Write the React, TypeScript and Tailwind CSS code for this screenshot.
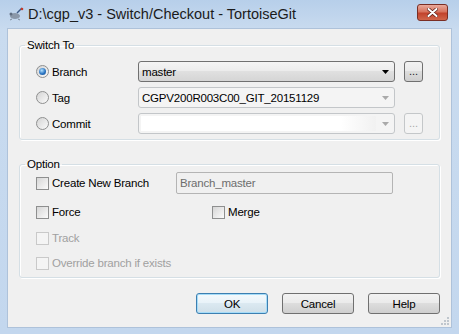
const btnGrad = "bg-[linear-gradient(#f2f2f2,#ebebeb_45%,#dddddd_50%,#cfcfcf)]";

function Radio({ checked }: { checked?: boolean }) {
  return (
    <span className="w-[13px] h-[13px] rounded-full border border-[#8e8f8f] bg-[linear-gradient(135deg,#d4d4d4,#fafafa)] flex items-center justify-center shrink-0">
      {checked && (
        <span className="w-[7px] h-[7px] rounded-full bg-[radial-gradient(circle_at_40%_35%,#b6e3ff,#2a74c2_55%,#1a4f8c)]" />
      )}
    </span>
  );
}

function Check({ disabled }: { disabled?: boolean }) {
  return (
    <span
      className={
        disabled
          ? "w-[13px] h-[13px] border border-[#c9c9c9] bg-[#f4f4f4] shrink-0"
          : "w-[13px] h-[13px] border border-[#8e8f8f] bg-[linear-gradient(135deg,#d6d6d6,#fbfbfb)] shrink-0"
      }
    />
  );
}

function Arrow({ color }: { color: string }) {
  return (
    <svg width="7" height="4" viewBox="0 0 7 4">
      <path d="M0 0h7L3.5 4z" fill={color} />
    </svg>
  );
}

function Dots({ disabled }: { disabled?: boolean }) {
  return (
    <div
      className={
        disabled
          ? "w-[19px] h-[21px] rounded-[3px] border border-[#c4c7c9] bg-[#f4f4f4] flex items-end justify-center pb-[4px] text-[11px] leading-none tracking-normal text-[#a8a8a8]"
          : `w-[19px] h-[21px] rounded-[3px] border border-[#707070] ${btnGrad} flex items-end justify-center pb-[4px] text-[11px] leading-none tracking-normal text-[#222]`
      }
    >
      ...
    </div>
  );
}

function Button({ label, primary }: { label: string; primary?: boolean }) {
  return (
    <div
      className={
        primary
          ? "w-[72px] h-[21px] rounded-[3px] border border-[#3c7fb1] shadow-[inset_0_0_0_1px_#a6dcf8] bg-[linear-gradient(#f4f9fc,#e9f3f9_45%,#dbe9f1_50%,#cfdfe8)] flex items-center justify-center"
          : `w-[72px] h-[21px] rounded-[3px] border border-[#707070] ${btnGrad} flex items-center justify-center`
      }
    >
      {label}
    </div>
  );
}

export default function App() {
  return (
    <div className="w-[459px] h-[334px] flex flex-col bg-[linear-gradient(#b7cfea,#c9dbef_30px,#c3d7ee)] font-['Liberation_Sans',Arial,sans-serif] text-[11.5px] tracking-[-0.2px] text-black leading-[14px]">
      {/* title bar */}
      <div className="h-[28px] flex items-center pl-[8px] pr-[11px]">
        <svg width="16" height="14" viewBox="0 0 16 14" className="mr-[4px]">
          <ellipse cx="7" cy="9" rx="5" ry="3" fill="#8a97a8" />
          <circle cx="3" cy="7" r="1.5" fill="#5f6d80" />
          <path d="M9 6l5-5" stroke="#3d5a85" strokeWidth="1.5" />
          <circle cx="14" cy="2" r="1.3" fill="#c43a2a" />
          <path d="M4 12l-2 1M10 12l2 1" stroke="#7c8797" strokeWidth="1" />
        </svg>
        <span className="text-[14.5px] tracking-normal text-[#1b1b1b]">D:\cgp_v3 - Switch/Checkout - TortoiseGit</span>
        <div className="ml-auto mt-[-4px] w-[31px] h-[17px] rounded-[3px] border border-[#7a2e24] bg-[linear-gradient(#e9a99b,#d7745e_45%,#c2432c_55%,#d0664a)] flex items-center justify-center">
          <svg width="11" height="9" viewBox="0 0 11 9">
            <path d="M1.5 1l8 7M9.5 1l-8 7" stroke="#5a1d14" strokeWidth="3.4" strokeLinecap="round" />
            <path d="M1.5 1l8 7M9.5 1l-8 7" stroke="#fff" strokeWidth="2" strokeLinecap="round" />
          </svg>
        </div>
      </div>

      {/* client */}
      <div className="mx-[7px] h-[300px] border border-[#aec2da] bg-[#f0f0f0] flex flex-col px-[11px]">
        <fieldset className="mt-[9px] border border-[#d5dfe5] rounded-[3px] pl-[16px] pr-[16px] pt-[9px] pb-[5px] shadow-[inset_1px_1px_0_#fff,1px_1px_0_#fff]">
          <legend className="ml-[-11px] px-[2px]">Switch To</legend>
          <div className="flex flex-col gap-[5px]">
            <div className="flex items-center h-[21px]">
              <div className="w-[102px] flex items-center gap-[3px]">
                <Radio checked />
                <span>Branch</span>
              </div>
              <div className="w-[257px] h-[21px] rounded-[3px] border border-[#707070] bg-[linear-gradient(#f4f4f4,#ececec_45%,#e0e0e0_50%,#d5d5d5)] flex items-center pl-[3px] pr-[5px]">
                <span className="flex-1">master</span>
                <Arrow color="#000" />
              </div>
              <div className="ml-[9px]">
                <Dots />
              </div>
            </div>
            <div className="flex items-center h-[21px]">
              <div className="w-[102px] flex items-center gap-[3px]">
                <Radio />
                <span>Tag</span>
              </div>
              <div className="w-[257px] h-[21px] rounded-[3px] border border-[#c3c6c9] bg-[#f4f4f4] flex items-center pl-[3px] pr-[5px]">
                <span className="flex-1">CGPV200R003C00_GIT_20151129</span>
                <Arrow color="#a9a9a9" />
              </div>
            </div>
            <div className="flex items-center h-[21px]">
              <div className="w-[102px] flex items-center gap-[3px]">
                <Radio />
                <span>Commit</span>
              </div>
              <div className="w-[257px] h-[21px] rounded-[3px] border border-[#c3c6c9] bg-[#f4f4f4] flex items-center p-[2px] pr-[5px]">
                <span className="flex-1 h-full bg-[linear-gradient(90deg,#ffffff_85%,#f1f1f1)]" />
                <span className="ml-[6px]">
                  <Arrow color="#a9a9a9" />
                </span>
              </div>
              <div className="ml-[9px]">
                <Dots disabled />
              </div>
            </div>
          </div>
        </fieldset>

        <fieldset className="mt-[17px] border border-[#d5dfe5] rounded-[3px] pl-[16px] pr-[46px] pt-[1px] pb-[7px] shadow-[inset_1px_1px_0_#fff,1px_1px_0_#fff]">
          <legend className="ml-[-11px] px-[2px]">Option</legend>
          <div className="flex flex-col">
            <div className="flex items-center h-[22px]">
              <div className="w-[140px] flex items-center gap-[3px]">
                <Check />
                <span>Create New Branch</span>
              </div>
              <div className="flex-1 h-[22px] border border-[#b4b4b4] rounded-[2px] bg-[#f0f0f0] flex items-center pl-[3px] text-[#6d6d6d]">
                Branch_master
              </div>
            </div>
            <div className="flex items-center h-[14px] mt-[11px]">
              <div className="w-[176px] flex items-center gap-[3px]">
                <Check />
                <span>Force</span>
              </div>
              <div className="flex items-center gap-[3px]">
                <Check />
                <span>Merge</span>
              </div>
            </div>
            <div className="flex items-center gap-[3px] h-[14px] mt-[12px] text-[#a0a0a0]">
              <Check disabled />
              <span>Track</span>
            </div>
            <div className="flex items-center gap-[3px] h-[14px] mt-[11px] text-[#a0a0a0]">
              <Check disabled />
              <span>Override branch if exists</span>
            </div>
          </div>
        </fieldset>

        <div className="mt-[15px] flex justify-end gap-[14px]">
          <Button label="OK" primary />
          <Button label="Cancel" />
          <Button label="Help" />
        </div>
        <div className="mt-auto mb-[2px] mr-[-9px] flex justify-end">
          <svg width="8" height="8" viewBox="0 0 8 8">
            <g fill="#bfc6cd">
              <rect x="6" y="0" width="2" height="2" />
              <rect x="3" y="3" width="2" height="2" />
              <rect x="6" y="3" width="2" height="2" />
              <rect x="0" y="6" width="2" height="2" />
              <rect x="3" y="6" width="2" height="2" />
              <rect x="6" y="6" width="2" height="2" />
            </g>
          </svg>
        </div>
      </div>
    </div>
  );
}
